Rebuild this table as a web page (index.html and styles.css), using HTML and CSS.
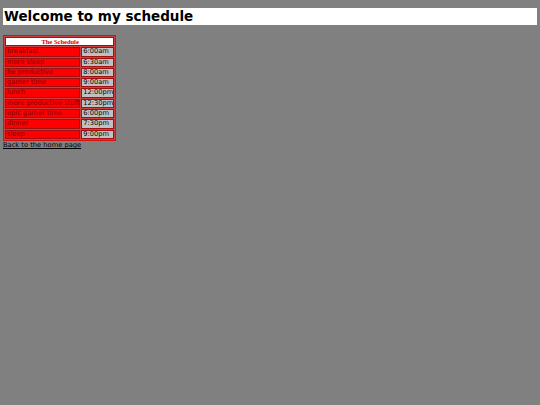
FILE: index.html
```html
<!DOCTYPE html>
<html>
<head>
<meta charset="utf-8">
<link rel="stylesheet" href="styles.css">
</head>
<body>
<h1 class="title">Welcome to my schedule</h1>
<table class="sched">
<tr><th colspan="2" class="cap">The Schedule</th></tr>
<tr><td class="act">breakfast</td><td class="time">6:00am</td></tr>
<tr><td class="act">more sleep</td><td class="time">6:30am</td></tr>
<tr><td class="act">be productive</td><td class="time">8:00am</td></tr>
<tr><td class="act">gamer time</td><td class="time">9:00am</td></tr>
<tr><td class="act">lunch</td><td class="time">12:00pm</td></tr>
<tr><td class="act">more productive stuff</td><td class="time">12:30pm</td></tr>
<tr><td class="act">epic gamer time</td><td class="time">6:00pm</td></tr>
<tr><td class="act">dinner</td><td class="time">7:30pm</td></tr>
<tr><td class="act">sleep</td><td class="time">9:00pm</td></tr>
</table>
<a class="home" href="#">Back to the home page</a>
</body>
</html>
```
FILE: styles.css
```css
html, body { background: #808080; }
body {
  margin: 8px 3px;
  font-family: "DejaVu Sans", Verdana, sans-serif;
  font-size: 6.7px;
  color: #000;
}
.title {
  background: #fff;
  margin: 0 0 10px 0;
  font-size: 13.5px;
  line-height: 17px;
  padding-left: 1px;
  font-weight: bold;
}
.sched {
  border: 1px solid #d81010;
  border-spacing: 1px;
  background: #c84040;
}
.sched td, .sched th {
  border: 1px solid #a01010;
  padding: 0 0 0 1px;
  height: 7.3px;
  line-height: 7.3px;
  white-space: nowrap;
}
.cap {
  background: #fff;
  color: #e00000;
  font-family: "Liberation Serif", "Times New Roman", serif;
  font-size: 6.5px;
  font-weight: bold;
  text-align: center;
}
.act {
  background: #ff0000;
  color: #7a0000;
  text-align: left;
}
.time {
  background: #c0c0c0;
  color: #000;
}
.home {
  display: block;
  color: #000;
  line-height: 9px;
}
```
